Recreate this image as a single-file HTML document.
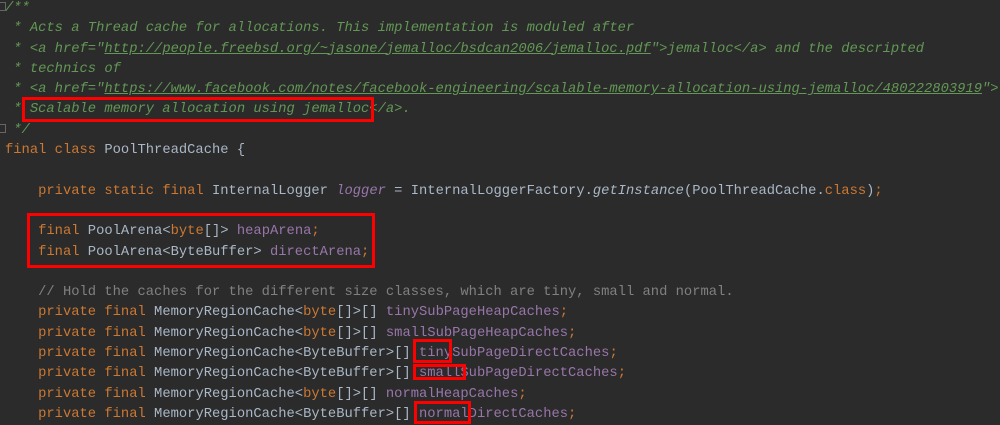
<!DOCTYPE html>
<html><head><meta charset="utf-8"><style>
html,body{margin:0;padding:0;background:#2b2b2b;width:1000px;height:424px;overflow:hidden}
pre{position:absolute;left:5px;top:-1px;margin:0;font-family:"Liberation Mono",monospace;font-size:13.8px;line-height:20.3px;color:#a9b7c6;white-space:pre}
.c{color:#629755;font-style:italic}
.u{text-decoration:underline}
.k{color:#cc7832}
.f{color:#9876aa}
.i{font-style:italic}
.g{color:#808080}
.box{position:absolute;border:3px solid #ff0000;box-sizing:border-box}
.fold{position:absolute;left:0;width:6px;height:9px;border:1px solid #666;border-left:none;box-sizing:border-box}
</style></head><body>
<pre><span class="c">/**
 * Acts a Thread cache for allocations. This implementation is moduled after
 * &lt;a href="<span class="u">http://people.freebsd.org/~jasone/jemalloc/bsdcan2006/jemalloc.pdf</span>"&gt;jemalloc&lt;/a&gt; and the descripted
 * technics of
 * &lt;a href="<span class="u">https://www.facebook.com/notes/facebook-engineering/scalable-memory-allocation-using-jemalloc/480222803919</span>"&gt;
 * Scalable memory allocation using jemalloc&lt;/a&gt;.
 */</span>
<span class="k">final class</span> PoolThreadCache {

    <span class="k">private static final</span> InternalLogger <span class="f i">logger</span> = InternalLoggerFactory.<span class="i">getInstance</span>(PoolThreadCache.<span class="k">class</span>)<span class="k">;</span>

    <span class="k">final</span> PoolArena&lt;<span class="k">byte</span>[]&gt; <span class="f">heapArena</span><span class="k">;</span>
    <span class="k">final</span> PoolArena&lt;ByteBuffer&gt; <span class="f">directArena</span><span class="k">;</span>

    <span class="g">// Hold the caches for the different size classes, which are tiny, small and normal.</span>
    <span class="k">private final</span> MemoryRegionCache&lt;<span class="k">byte</span>[]&gt;[] <span class="f">tinySubPageHeapCaches</span><span class="k">;</span>
    <span class="k">private final</span> MemoryRegionCache&lt;<span class="k">byte</span>[]&gt;[] <span class="f">smallSubPageHeapCaches</span><span class="k">;</span>
    <span class="k">private final</span> MemoryRegionCache&lt;ByteBuffer&gt;[] <span class="f">tinySubPageDirectCaches</span><span class="k">;</span>
    <span class="k">private final</span> MemoryRegionCache&lt;ByteBuffer&gt;[] <span class="f">smallSubPageDirectCaches</span><span class="k">;</span>
    <span class="k">private final</span> MemoryRegionCache&lt;<span class="k">byte</span>[]&gt;[] <span class="f">normalHeapCaches</span><span class="k">;</span>
    <span class="k">private final</span> MemoryRegionCache&lt;ByteBuffer&gt;[] <span class="f">normalDirectCaches</span><span class="k">;</span></pre>
<div class="fold" style="top:2px"></div>
<div class="fold" style="top:124px"></div>
<div class="box" style="left:22px;top:97px;width:352px;height:25px"></div>
<div class="box" style="left:27px;top:213px;width:348px;height:55px"></div>
<div class="box" style="left:413px;top:339px;width:39px;height:24px"></div>
<div class="box" style="left:413px;top:364px;width:53px;height:16px"></div>
<div class="box" style="left:414px;top:401px;width:57px;height:23px"></div>
</body></html>
